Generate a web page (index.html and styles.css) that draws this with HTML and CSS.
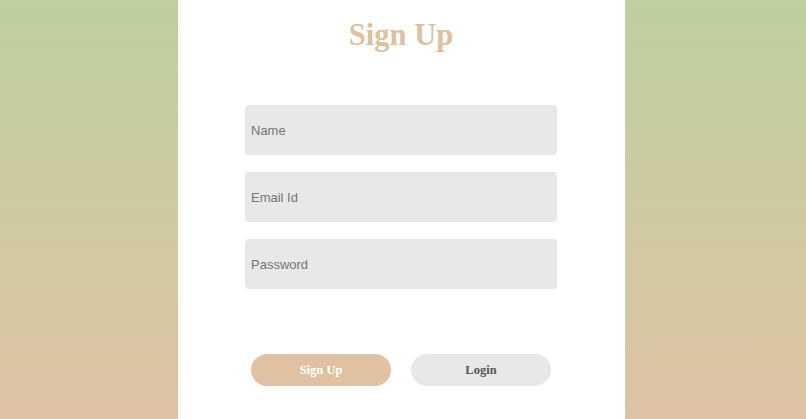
FILE: index.html
```html
<!DOCTYPE html>
<html>
<head>
<meta charset="utf-8">
<link rel="stylesheet" href="styles.css">
</head>
<body>
<div class="page">
  <div class="card">
    <h1 class="title">Sign Up</h1>
    <form class="form">
      <input class="field" type="text" placeholder="Name">
      <input class="field" type="email" placeholder="Email Id">
      <input class="field" type="password" placeholder="Password">
    </form>
    <div class="actions">
      <button class="btn btn-primary" type="button">Sign Up</button>
      <button class="btn btn-secondary" type="button">Login</button>
    </div>
  </div>
</div>
</body>
</html>
```

FILE: styles.css
```css
html, body {
  margin: 0;
  padding: 0;
  height: 100%;
}
body {
  background: linear-gradient(to bottom, #bdd09e 0%, #dfc3a4 100%);
  font-family: "Liberation Serif", "Times New Roman", serif;
}
.page {
  height: 419px;
  display: flex;
}
.card {
  box-sizing: border-box;
  margin-left: 178px;
  width: 447px;
  height: 100%;
  padding-right: 1px;
  background: #ffffff;
  display: flex;
  flex-direction: column;
  align-items: center;
}
.title {
  margin: 0;
  padding-top: 17px;
  font-size: 30.5px;
  line-height: 36px;
  font-weight: bold;
  color: #e0bf9c;
}
.form {
  margin-top: 52px;
  display: flex;
  flex-direction: column;
  gap: 17px;
}
.field {
  box-sizing: border-box;
  width: 312px;
  height: 50px;
  border: none;
  border-radius: 4px;
  background: #e8e8e8;
  padding: 0 6px;
  font-family: "Liberation Sans", Arial, sans-serif;
  font-size: 13px;
  color: #333;
  outline: none;
}
.field::placeholder {
  color: #757575;
}
.actions {
  margin-top: 65px;
  display: flex;
  gap: 20px;
}
.btn {
  width: 140px;
  height: 32px;
  border: none;
  border-radius: 16px;
  font-family: "Liberation Serif", "Times New Roman", serif;
  font-size: 12.5px;
  font-weight: bold;
  cursor: pointer;
}
.btn-primary {
  background: #e0c2a2;
  color: #ffffff;
}
.btn-secondary {
  background: #e8e8e8;
  color: #555555;
}
```
